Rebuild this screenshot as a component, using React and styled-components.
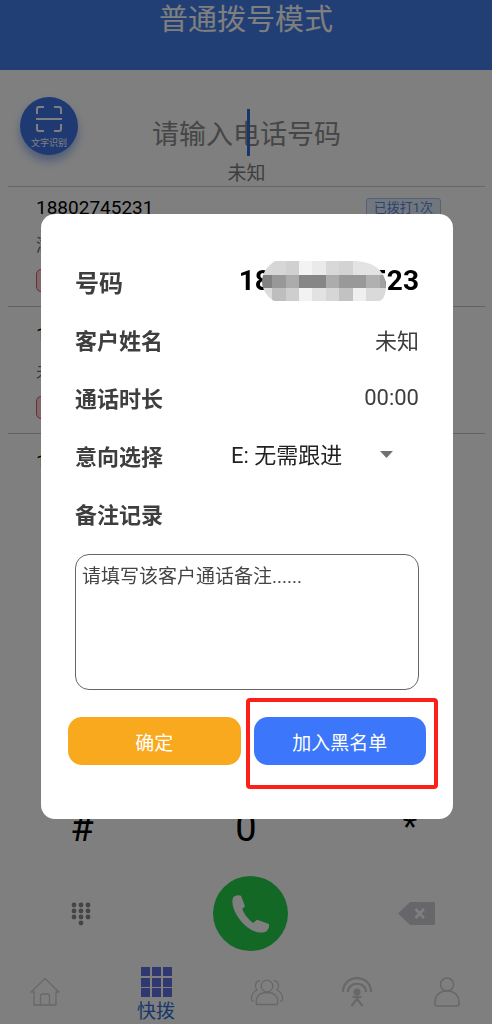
import React from "react";
import styled, { createGlobalStyle } from "styled-components";

const GlobalStyle = createGlobalStyle`
  *, *::before, *::after { box-sizing: border-box; }
  body {
    margin: 0;
    background: #ffffff;
    font-family: Roboto, "Noto Sans CJK SC", sans-serif;
    color: #3e3e3e;
  }
  button, input, select, textarea { font-family: inherit; }
  button { cursor: pointer; }
`;

const Page = styled.div`
  min-height: 100vh;
  display: flex;
  flex-direction: column;
`;

const Header = styled.header`
  background: #437ee9;
  padding-bottom: 30px;
  text-align: center;
`;

const Title = styled.h1`
  margin: 0;
  font-size: 29px;
  line-height: 40px;
  font-weight: 400;
  color: #ffffff;
`;

const DialArea = styled.section`
  margin: 0 7px 0 8px;
  padding: 27px 12px 0;
  border-bottom: 1px solid #cfcfcf;
`;

const DialRow = styled.div`
  display: grid;
  grid-template-columns: 58px 1fr 58px;
  height: 60px;
`;

const ScanButton = styled.button`
  width: 58px;
  height: 58px;
  padding: 9px 0 0;
  border: 0;
  border-radius: 50%;
  background: #3f75e4;
  color: #ffffff;
  box-shadow: 0 6px 10px rgba(63, 117, 228, 0.5);
  display: flex;
  flex-direction: column;
  align-items: center;
  gap: 5px;
  font-size: 9px;
  line-height: 12px;
  white-space: nowrap;
`;

const NumberField = styled.div`
  position: relative;
  align-self: end;
  height: 48px;
`;

const NumberInput = styled.input`
  width: 100%;
  height: 48px;
  padding: 4px 0 0;
  border: 0;
  outline: 0;
  background: transparent;
  text-align: center;
  font-size: 27px;
  color: #000000;
  &::placeholder { color: #8c8c8c; opacity: 1; }
`;

const Caret = styled.span`
  position: absolute;
  top: 0;
  left: 50%;
  width: 3px;
  height: 47px;
  background: #2c6fd8;
`;

const Region = styled.p`
  margin: 5px 0 0;
  text-align: center;
  font-size: 19px;
  line-height: 24px;
  color: #7c7c7c;
`;

const CallList = styled.ul`
  flex: 1;
  margin: 0 7px 0 8px;
  padding: 0;
  list-style: none;
`;

const CallItem = styled.li`
  padding: 14px 44px 14px 28px;
  border-bottom: 1px solid #c4c4c4;
  &:first-child { padding-top: 7px; }
  &:last-child { border-bottom: 0; }
`;

const CallTop = styled.div`
  display: flex;
  justify-content: space-between;
  align-items: center;
  font-size: 19px;
  line-height: 28px;
  color: #000000;
`;

const CountTag = styled.span`
  border: 1px solid #a9c6f5;
  border-radius: 3px;
  padding: 0 7px;
  background: #e4eefc;
  color: #5688dc;
  font-size: 13px;
  line-height: 18px;
`;

const CallPlace = styled.div`
  margin: 10px 0 11px;
  font-size: 17px;
  line-height: 26px;
  color: #707070;
`;

const StatusTag = styled.div`
  width: 60px;
  height: 23px;
  border: 1px solid #dc5a68;
  border-radius: 5px;
  background: #f6d4d7;
`;

const Keys = styled.div`
  display: grid;
  grid-template-columns: repeat(3, 1fr);
  margin-bottom: 24px;
`;

const Key = styled.button`
  padding: 0;
  border: 0;
  background: transparent;
  color: #000000;
  font-family: ${(p) => (p.$small ? '"Liberation Sans", sans-serif' : "inherit")};
  font-size: 38px;
  line-height: 48px;
  font-weight: 400;
`;

const Actions = styled.div`
  display: flex;
  justify-content: space-between;
  align-items: center;
  padding: 0 57px 0 59px;
  margin-bottom: 16px;
`;

const IconButton = styled.button`
  width: ${(p) => p.$width}px;
  height: 44px;
  padding: 0;
  border: 0;
  background: transparent;
  display: grid;
  place-items: center;
`;

const CallButton = styled.button`
  width: 75px;
  height: 75px;
  padding: 0;
  border: 0;
  border-radius: 50%;
  background: #27d04c;
  display: grid;
  place-items: center;
`;

const TabBar = styled.nav`
  display: flex;
  align-items: flex-end;
  height: 57px;
`;

const Tab = styled.a`
  flex: ${(p) => (p.$active ? "0 0 132px" : "1")};
  padding-bottom: ${(p) => (p.$active ? 0 : 17)}px;
  display: flex;
  flex-direction: column;
  align-items: center;
  gap: 3px;
  font-size: 19px;
  line-height: 24px;
  color: #2f6fd6;
  text-decoration: none;
`;

const Line = styled.svg`
  display: block;
  fill: none;
  stroke: #d0d0d3;
  stroke-width: ${(p) => p.$weight || 1.3};
  stroke-linejoin: round;
`;

const Backdrop = styled.div`
  position: fixed;
  inset: 0;
  padding: 9px 39px 0 41px;
  background: rgba(0, 0, 0, 0.5);
  display: flex;
  align-items: center;
`;

const Dialog = styled.form`
  flex: 1;
  padding: 38px 0 54px;
  border-radius: 14px;
  background: #ffffff;
`;

const Row = styled.div`
  display: flex;
  justify-content: space-between;
  align-items: center;
  height: 58px;
  padding: 0 34px;
`;

const Label = styled.label`
  font-size: ${(p) => (p.$large ? 24 : 22)}px;
  font-weight: 700;
`;

const Value = styled.output`
  font-size: 22px;
`;

const PhoneValue = styled.output`
  display: flex;
  align-items: center;
  font-size: 28px;
  line-height: 40px;
  font-weight: 700;
  color: #000000;
`;

const Mosaic = styled.svg`
  position: relative;
  margin: 0 -15px 0 -9px;
`;

const SelectBox = styled.div`
  position: relative;
  width: 188px;
`;

const Select = styled.select`
  width: 100%;
  height: 40px;
  padding: 0;
  border: 0;
  outline: 0;
  appearance: none;
  background: transparent;
  font-size: 22px;
  color: #222222;
`;

const Arrow = styled.svg`
  position: absolute;
  top: 16px;
  right: 26px;
  pointer-events: none;
`;

const Notes = styled.textarea`
  display: block;
  width: calc(100% - 68px);
  height: 136px;
  margin: 12px 34px 27px;
  padding: 8px 6px;
  border: 1px solid #666666;
  border-radius: 14px;
  outline: 0;
  resize: none;
  font-size: 19px;
  line-height: 28px;
  color: #333333;
  &::placeholder { color: #444444; opacity: 1; }
`;

const Buttons = styled.div`
  display: grid;
  grid-template-columns: 1fr 1fr;
  gap: 13px;
  padding: 0 27px;
`;

const DialogButton = styled.button`
  width: 100%;
  height: 48px;
  padding: 0;
  border: 0;
  border-radius: 14px;
  background: ${(p) => p.$color};
  color: #ffffff;
  font-size: 19px;
`;

const Highlight = styled.div`
  position: relative;
  &::after {
    content: "";
    position: absolute;
    inset: -19px -12px -24px -8px;
    border: 4px solid #fe2018;
    border-radius: 4px;
    pointer-events: none;
  }
`;

const mosaicColumns = [0, 10, 24, 37, 50, 64, 77, 91, 104, 118, 124];
const mosaicRows = [
  { y: 0, h: 14, shades: ["#d8d8d8", "#d6d6d6", "#d0d0d0", "#f3f3f3", "#eaeaea", "#d8d8d8", "#d3d3d3", "#e3e3e3", "#e3e3e3", "#dedede"] },
  { y: 14, h: 13, shades: ["#828282", "#989898", "#acacac", "#868686", "#868686", "#acacac", "#999999", "#999999", "#b0b0b0", "#a2a2a2"] },
  { y: 27, h: 13, shades: ["#dcdcdc", "#bebebe", "#cecece", "#f2f2f2", "#e2e2e2", "#d6d6d6", "#c2c2c2", "#efefef", "#dadada", "#dadada"] },
];

function NumberMosaic() {
  return (
    <Mosaic width="124" height="40" viewBox="0 0 124 40" aria-hidden="true">
      <clipPath id="mask">
        <path d="M13 0H90C112 0 124 10 124 26C124 33 121 40 117 40H12C5 36 0 28 0 21C0 12 5 5 13 0Z" />
      </clipPath>
      <g clipPath="url(#mask)" shapeRendering="crispEdges">
        {mosaicRows.map((row) =>
          row.shades.map((shade, i) => (
            <rect
              key={`${row.y}-${i}`}
              x={mosaicColumns[i]}
              y={row.y}
              width={mosaicColumns[i + 1] - mosaicColumns[i]}
              height={row.h}
              fill={shade}
            />
          ))
        )}
      </g>
    </Mosaic>
  );
}

const padDots = [
  [2, 3], [9, 3], [16, 3],
  [2, 9], [9, 9], [16, 9],
  [2, 15], [9, 15], [16, 15],
  [9, 21],
];

export default function App() {
  return (
    <>
      <GlobalStyle />
      <Page>
        <Header>
          <Title>普通拨号模式</Title>
        </Header>

        <DialArea>
          <DialRow>
            <ScanButton type="button">
              <svg width="26" height="26" viewBox="0 0 26 26" fill="none" stroke="#fff" strokeWidth="2">
                <path d="M1 8V3Q1 1 3 1H8M18 1H23Q25 1 25 3V8M25 18V23Q25 25 23 25H18M8 25H3Q1 25 1 23V18M0 13H26" />
              </svg>
              文字识别
            </ScanButton>
            <NumberField>
              <NumberInput type="tel" aria-label="电话号码" placeholder="请输入电话号码" />
              <Caret />
            </NumberField>
          </DialRow>
          <Region>未知</Region>
        </DialArea>

        <CallList>
          <CallItem>
            <CallTop>
              18802745231
              <CountTag>已拨打1次</CountTag>
            </CallTop>
            <CallPlace>湖</CallPlace>
            <StatusTag />
          </CallItem>
          <CallItem>
            <CallTop>1</CallTop>
            <CallPlace>未</CallPlace>
            <StatusTag />
          </CallItem>
          <CallItem>
            <CallTop>1</CallTop>
          </CallItem>
        </CallList>

        <Keys>
          <Key type="button">#</Key>
          <Key type="button">0</Key>
          <Key type="button" $small>*</Key>
        </Keys>

        <Actions>
          <IconButton type="button" $width={44} aria-label="键盘">
            <svg width="20" height="24" viewBox="-1 0 20 24" fill="#8a8a8a">
              {padDots.map(([x, y]) => (
                <circle key={`${x}-${y}`} cx={x} cy={y} r="2.4" />
              ))}
            </svg>
          </IconButton>
          <CallButton type="button" aria-label="拨打">
            <svg width="38" height="38" viewBox="0 0 114 114" fill="#fff">
              <path d="M3 8C8 0 20 -1 27 2L39 34L31 42C36 58 50 74 64 84L75 74L111 87C113 98 106 110 96 112C78 116 52 106 32 84C10 60 -4 28 3 8Z" />
            </svg>
          </CallButton>
          <IconButton type="button" $width={37} aria-label="删除">
            <svg width="37" height="23" viewBox="0 0 37 23">
              <path d="M0 11.5L11 1Q12 0 13 0H36Q37 0 37 1V22Q37 23 36 23H13Q12 23 11 22Z" fill="#cfcfd6" />
              <path d="M17.5 7L26 16M26 7L17.5 16" stroke="#fff" strokeWidth="2.6" />
            </svg>
          </IconButton>
        </Actions>

        <TabBar>
          <Tab href="#home" aria-label="首页">
            <Line width="30" height="30" viewBox="0 0 30 30">
              <path d="M1 15L15 1.500L29 15H26V28H4V15ZM10.500 28V19Q10.500 17 12.500 17H17.500Q19.500 17 19.500 19V28" />
            </Line>
          </Tab>
          <Tab href="#quick" $active>
            <svg width="31" height="30" viewBox="0 0 31 30" fill="#6070e2">
              {[0, 11, 22].map((x) =>
                [0, 11, 21].map((y) => <rect key={`${x}-${y}`} x={x} y={y} width="9" height="9" />)
              )}
            </svg>
            快拨
          </Tab>
          <Tab href="#customers" aria-label="客户">
            <Line width="34" height="30" viewBox="0 0 34 30">
              <circle cx="17" cy="9" r="5.800" />
              <path d="M6.500 27.500C5 20 9 15.500 17 15.500S29 20 27.500 27.500ZM10 3.500C5.500 4 4 9 7 13C3 15 1 18 1.500 23L4 24.500M24 3.500C28.500 4 30 9 27 13C31 15 33 18 32.500 23L30 24.500" />
            </Line>
          </Tab>
          <Tab href="#online" aria-label="在线">
            <Line width="30" height="30" viewBox="0 0 30 30" $weight={2.2}>
              <path d="M1 15C1 -3.500 29 -3.500 29 15M6 15C6 4 24 4 24 15M15 16V23M15 22L9.500 29M15 22L20.500 29M10.500 19.500L15 21L19.500 19.500" />
              <circle cx="15" cy="15" r="2.500" fill="#d0d0d3" />
            </Line>
          </Tab>
          <Tab href="#me" aria-label="我的">
            <Line width="26" height="30" viewBox="0 0 26 30" $weight={1.6}>
              <circle cx="13" cy="7.500" r="6.500" />
              <path d="M1 27V25C1 10 25 10 25 25V27Q25 29 23 29H3Q1 29 1 27Z" />
            </Line>
          </Tab>
        </TabBar>
      </Page>

      <Backdrop>
        <Dialog role="dialog" aria-label="通话记录" onSubmit={(e) => e.preventDefault()}>
          <Row>
            <Label $large htmlFor="number">号码</Label>
            <PhoneValue id="number">
              18
              <NumberMosaic />
              523
            </PhoneValue>
          </Row>
          <Row>
            <Label htmlFor="name">客户姓名</Label>
            <Value id="name">未知</Value>
          </Row>
          <Row>
            <Label htmlFor="duration">通话时长</Label>
            <Value id="duration">00:00</Value>
          </Row>
          <Row>
            <Label htmlFor="intent">意向选择</Label>
            <SelectBox>
              <Select id="intent" defaultValue="E">
                <option value="E">E: 无需跟进</option>
              </Select>
              <Arrow width="13" height="7" viewBox="0 0 13 7">
                <path d="M0 0H13L6.500 7Z" fill="#717171" />
              </Arrow>
            </SelectBox>
          </Row>
          <Row>
            <Label htmlFor="notes">备注记录</Label>
          </Row>
          <Notes id="notes" placeholder="请填写该客户通话备注......" />
          <Buttons>
            <DialogButton type="submit" $color="#f9a91e">确定</DialogButton>
            <Highlight>
              <DialogButton type="button" $color="#3b76fb">加入黑名单</DialogButton>
            </Highlight>
          </Buttons>
        </Dialog>
      </Backdrop>
    </>
  );
}
